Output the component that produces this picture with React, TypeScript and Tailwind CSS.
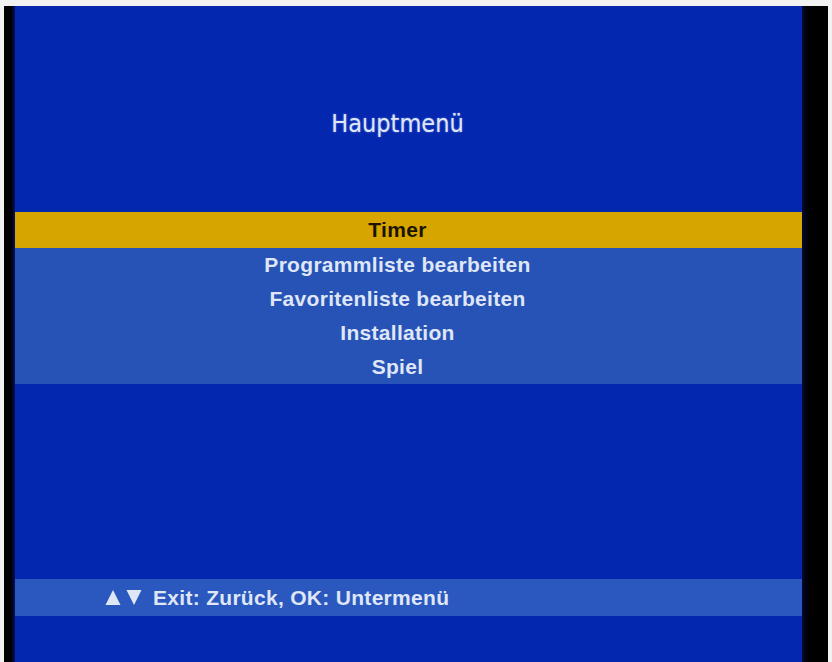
// STB main menu screen (Hauptmenü) captured from a TV set

const items = [
  "Programmliste bearbeiten",
  "Favoritenliste bearbeiten",
  "Installation",
  "Spiel",
];

export default function App() {
  return (
    <div className="w-[832px] h-[662px] bg-[#f2f2f2] pt-[6px] pl-[4px] pr-[4px] flex overflow-hidden">
      <div className="flex-1 flex bg-black">
        {/* left bezel */}
        <div className="w-[11px] bg-linear-to-r from-black from-50% to-[#061660]" />

        {/* picture */}
        <div className="flex-1 flex flex-col bg-[#0427b0] text-[#dfe6f6] font-['Liberation_Sans',Arial,sans-serif]">
          <div className="h-[206px] flex justify-center pt-[104px] pr-[22px]">
            <h1 className="h-[28px] leading-[28px] text-[25px] font-['DejaVu_Sans_Condensed','Liberation_Sans_Narrow',sans-serif] [text-shadow:0_0_2px_rgba(220,230,255,0.5)]">
              Hauptmenü
            </h1>
          </div>

          <div className="h-[36px] bg-[#d6a500] flex items-center justify-center pr-[22px]">
            <span className="text-[21px] tracking-[0.3px] font-bold text-[#1c1400]">Timer</span>
          </div>

          <div className="h-[136px] bg-[#2853b6] flex flex-col">
            {items.map((label) => (
              <div
                key={label}
                className="h-[34px] flex items-center justify-center pr-[22px] text-[21px] tracking-[0.3px] font-bold"
              >
                {label}
              </div>
            ))}
          </div>

          <div className="flex-1" />

          <div className="h-[37px] bg-[#2b58be] flex items-center pl-[90px] text-[21px] tracking-[0.3px] font-bold">
            <span className="flex gap-[5px] mr-[11px]">
              <svg width="16" height="17" viewBox="0 0 16 17">
                <polygon points="8,1 15.5,16 0.5,16" fill="#dfe6f6" />
              </svg>
              <svg width="16" height="17" viewBox="0 0 16 17">
                <polygon points="0.5,1 15.5,1 8,16" fill="#dfe6f6" />
              </svg>
            </span>
            <span>Exit: Zurück, OK: Untermenü</span>
          </div>

          <div className="h-[46px]" />
        </div>

        {/* right bezel */}
        <div className="w-[26px] bg-linear-to-r from-[#050a30] to-black to-40%" />
      </div>
    </div>
  );
}
